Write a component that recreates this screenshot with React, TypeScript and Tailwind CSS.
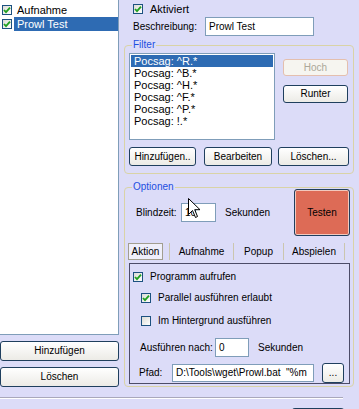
import type { ReactNode } from "react";

function Check({ checked }: { checked: boolean }) {
  return (
    <span className="flex h-[10px] w-[10px] shrink-0 items-center justify-center border border-[#1c5180] bg-gradient-to-br from-[#dcdcd6] to-white">
      {checked && (
        <svg width="8" height="8" viewBox="0 0 8 8">
          <polyline points="1,4 3,6.2 7,1.6" fill="none" stroke="#21a121" strokeWidth="1.8" />
        </svg>
      )}
    </span>
  );
}

function Btn({ children, className, disabled }: { children: ReactNode; className: string; disabled?: boolean }) {
  return (
    <div
      className={
        "flex items-center justify-center rounded-[3px] border " +
        (disabled
          ? "border-[#e4bfae] bg-[#f6f5f0] text-[#aca899] "
          : "border-[#1f3f5e] bg-gradient-to-b from-white to-[#ecebe6] text-black ") +
        className
      }
    >
      {children}
    </div>
  );
}

function Field({ value, className }: { value: string; className: string }) {
  return (
    <div className={"flex items-center overflow-hidden whitespace-pre border border-[#7f9db9] bg-white pl-[3px] " + className}>
      {value}
    </div>
  );
}

const filters = ["Pocsag: ^R.*", "Pocsag: ^B.*", "Pocsag: ^H.*", "Pocsag: ^F.*", "Pocsag: ^P.*", "Pocsag: !.*"];

export default function App() {
  return (
    <div className="relative h-[409px] w-[359px] overflow-hidden bg-[#dcdcf8] font-['Liberation_Sans',sans-serif] text-[10px] leading-[12px] text-black">
      <div className="flex h-[397px]">
        {/* left list */}
        <div className="flex w-[119px] flex-col">
          <div className="h-[335px] border-b border-r border-[#7f9db9] bg-white pt-[3px]">
            <div className="flex h-[14px] items-center text-[11px]">
              <span className="ml-[2px]"><Check checked /></span>
              <span className="ml-[3px] pl-[2px]">Aufnahme</span>
            </div>
            <div className="flex h-[14px] items-center text-[11px]">
              <span className="ml-[2px]"><Check checked /></span>
              <span className="ml-[2px] flex h-full flex-1 items-center bg-[#2e6bb3] pl-[3px] text-white">Prowl Test</span>
            </div>
          </div>
          <Btn className="mt-[6px] h-[20px] w-[119px]">Hinzufügen</Btn>
          <Btn className="mt-[6px] h-[20px] w-[119px]">Löschen</Btn>
        </div>

        {/* right side */}
        <div className="flex w-[240px] flex-col">
          <div className="flex h-[17px] items-center pl-[14px]">
            <Check checked />
            <span className="ml-[7px] text-[11px]">Aktiviert</span>
          </div>
          <div className="flex h-[19px] items-center pl-[14px]">
            <span className="w-[72px]">Beschreibung:</span>
            <Field value="Prowl Test" className="h-[19px] w-[109px]" />
          </div>

          {/* Filter */}
          <div className="relative ml-[5px] mt-[9px] h-[129px] w-[230px] rounded-[4px] border border-[#d9d3a6] pl-[4px] pt-[7px]">
            <span className="absolute -top-[7px] left-[7px] bg-[#dcdcf8] px-[1px] text-[#1c4ee0]">Filter</span>
            <div className="flex">
              <div className="h-[87px] w-[146px] border border-[#7f9db9] bg-white pt-[1px] text-[11px]">
                {filters.map((f, i) => (
                  <div
                    key={f}
                    className={"mx-[1px] flex h-[12px] items-center pl-[3px] " + (i === 0 ? "bg-[#2e6bb3] text-white" : "")}
                  >
                    {f}
                  </div>
                ))}
              </div>
              <div className="ml-[8px] flex flex-col">
                <Btn disabled className="mt-[6px] h-[17px] w-[65px]">Hoch</Btn>
                <Btn className="mt-[9px] h-[18px] w-[65px]">Runter</Btn>
              </div>
            </div>
            <div className="mt-[7px] flex">
              <Btn className="h-[19px] w-[67px]">Hinzufügen..</Btn>
              <Btn className="ml-[8px] h-[19px] w-[68px]">Bearbeiten</Btn>
              <Btn className="ml-[6px] h-[19px] w-[71px]">Löschen...</Btn>
            </div>
          </div>

          {/* Optionen */}
          <div className="relative ml-[5px] mt-[13px] h-[200px] w-[230px] rounded-[4px] border border-[#d9d3a6] pl-[4px] pr-[3px] pt-[1px]">
            <span className="absolute -top-[7px] left-[7px] bg-[#dcdcf8] px-[1px] text-[#1c4ee0]">Optionen</span>
            <div className="flex">
              <div className="flex h-[47px] items-center pl-[7px]">
                <span className="w-[45px]">Blindzeit:</span>
                <Field value="10" className="h-[19px] w-[35px]" />
                <span className="ml-[9px]">Sekunden</span>
              </div>
              <div className="ml-auto flex h-[47px] w-[56px] items-center justify-center rounded-[3px] border border-[#1f3f5e] bg-[#dd6b56] shadow-[inset_0_0_0_1px_#f2c9bd]">
                Testen
              </div>
            </div>

            {/* tabs */}
            <div className="-ml-[1px] mt-[7px] flex h-[17px]">
              <div className="flex w-[42px] border-r border-[#cbc6ae]">
                <div className="flex w-[35px] items-center justify-center border border-[#a29e90] bg-[#efeffa]">Aktion</div>
              </div>
              <div className="flex w-[64px] items-center justify-center border-r border-[#cbc6ae]">Aufnahme</div>
              <div className="flex w-[50px] items-center justify-center border-r border-[#cbc6ae]">Popup</div>
              <div className="flex w-[61px] items-center justify-center border-r border-[#cbc6ae]">Abspielen</div>
            </div>

            <div className="mt-[3px] h-[121px] w-[221px] border border-[#4c4c68] pl-[3px]">
              <div className="mt-[6px] flex h-[14px] items-center">
                <Check checked />
                <span className="ml-[7px]">Programm aufrufen</span>
              </div>
              <div className="ml-[8px] mt-[7px] flex h-[14px] items-center">
                <Check checked />
                <span className="ml-[7px]">Parallel ausführen erlaubt</span>
              </div>
              <div className="ml-[8px] mt-[9px] flex h-[14px] items-center">
                <Check checked={false} />
                <span className="ml-[7px]">Im Hintergrund ausführen</span>
              </div>
              <div className="ml-[7px] mt-[10px] flex h-[19px] items-center">
                <span className="w-[75px]">Ausführen nach:</span>
                <Field value="0" className="h-[19px] w-[34px]" />
                <span className="ml-[9px]">Sekunden</span>
              </div>
              <div className="ml-[6px] mt-[6px] flex h-[20px] items-center">
                <span className="w-[33px]">Pfad:</span>
                <Field value={'D:\\Tools\\wget\\Prowl.bat  "%m'} className="h-[18px] w-[142px]" />
                <Btn className="ml-[8px] h-[20px] w-[22px]">...</Btn>
              </div>
            </div>
          </div>
        </div>
      </div>

      <div className="h-[1px] w-[343px] bg-[#a9a8bb]" />
      <div className="h-[1px] w-[343px] bg-white" />
      <div className="ml-[292px] mt-[9px] h-[4px] w-[52px] rounded-t-[3px] border-x border-t border-[#1f3f5e] bg-white" />

      {/* mouse pointer */}
      <svg className="absolute left-[188px] top-[198px]" width="13" height="21" viewBox="0 0 13 21">
        <path d="M0.5 0.5 L0.5 16.5 L4.5 12.5 L7.5 19.5 L9.5 18.5 L6.7 11.7 L12 11.7 Z" fill="white" stroke="black" strokeWidth="1" />
      </svg>
    </div>
  );
}
